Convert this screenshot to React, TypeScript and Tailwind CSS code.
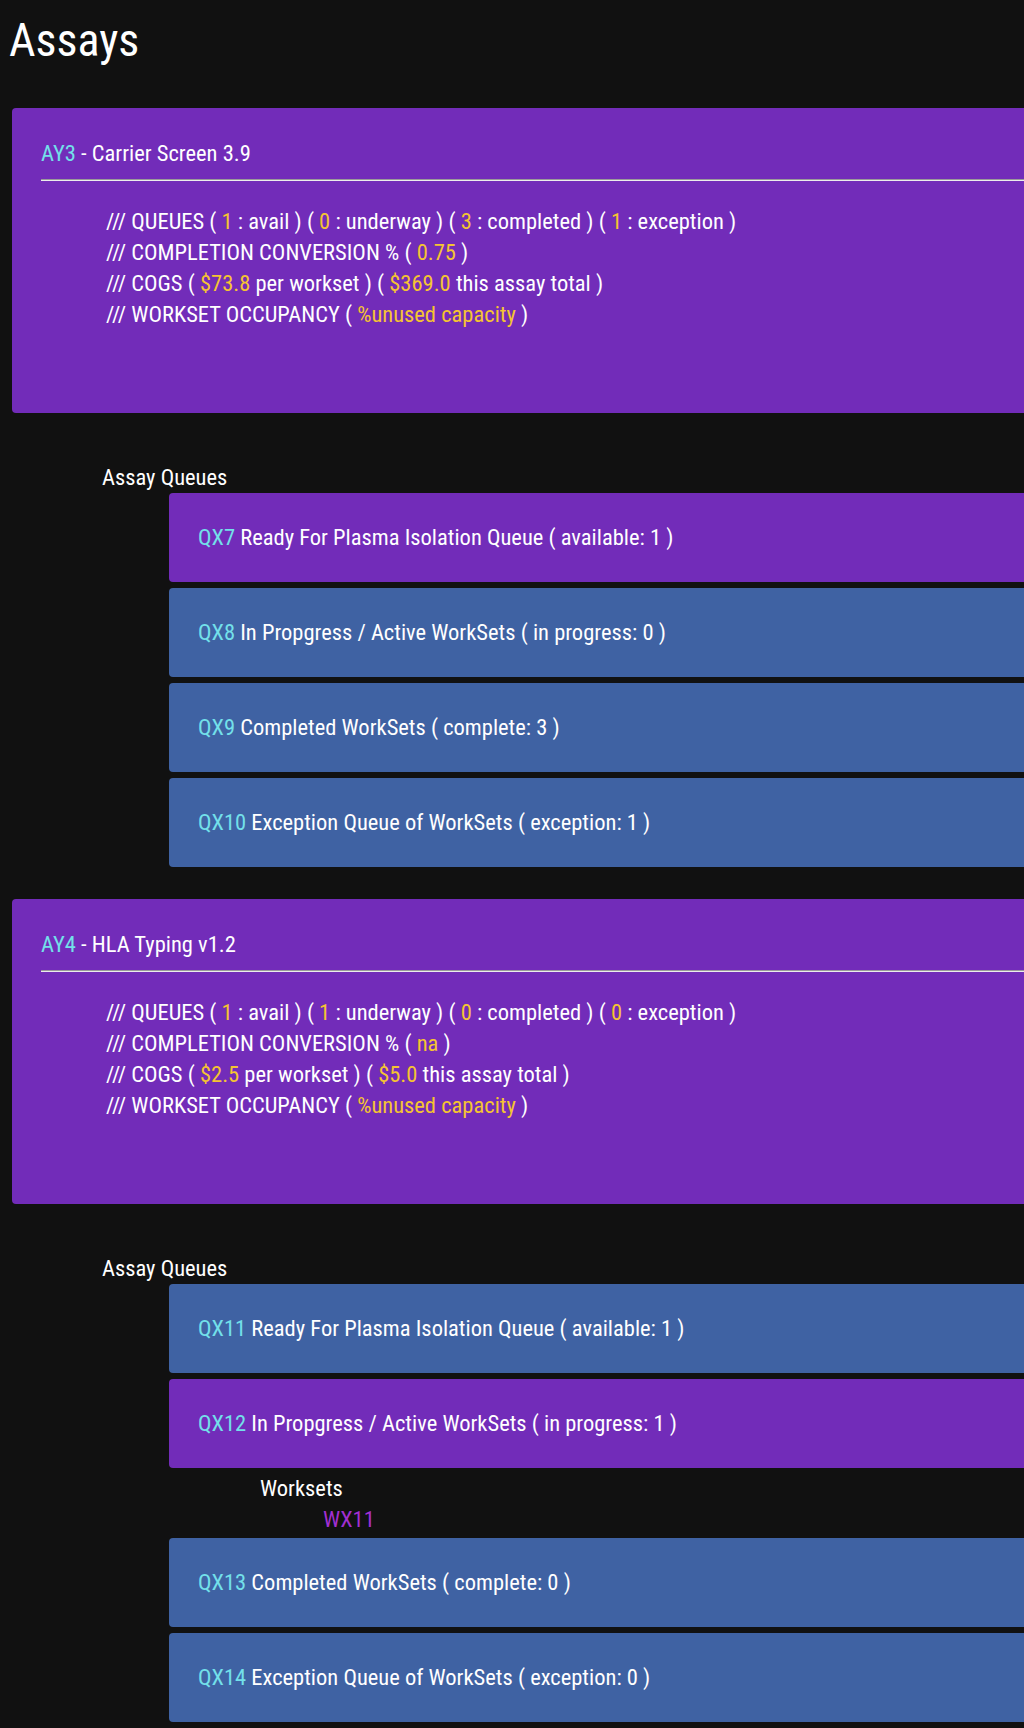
import React from 'react'

type Queue = {
    id: string
    label: string
    count: string
    active?: boolean
    worksets?: string[]
}

type Assay = {
    id: string
    name: string
    stats: { avail: string; underway: string; completed: string; exception: string }
    conversion: string
    cogsPer: string
    cogsTotal: string
    queues: Queue[]
}

const assays: Assay[] = [
    {
        id: 'AY3',
        name: 'Carrier Screen 3.9',
        stats: { avail: '1', underway: '0', completed: '3', exception: '1' },
        conversion: '0.75',
        cogsPer: '$73.8',
        cogsTotal: '$369.0',
        queues: [
            { id: 'QX7', label: 'Ready For Plasma Isolation Queue', count: 'available: 1', active: true },
            { id: 'QX8', label: 'In Propgress / Active WorkSets', count: 'in progress: 0' },
            { id: 'QX9', label: 'Completed WorkSets', count: 'complete: 3' },
            { id: 'QX10', label: 'Exception Queue of WorkSets', count: 'exception: 1' },
        ],
    },
    {
        id: 'AY4',
        name: 'HLA Typing v1.2',
        stats: { avail: '1', underway: '1', completed: '0', exception: '0' },
        conversion: 'na',
        cogsPer: '$2.5',
        cogsTotal: '$5.0',
        queues: [
            { id: 'QX11', label: 'Ready For Plasma Isolation Queue', count: 'available: 1' },
            { id: 'QX12', label: 'In Propgress / Active WorkSets', count: 'in progress: 1', active: true, worksets: ['WX11'] },
            { id: 'QX13', label: 'Completed WorkSets', count: 'complete: 0' },
            { id: 'QX14', label: 'Exception Queue of WorkSets', count: 'exception: 0' },
        ],
    },
]

const Y = ({ children }: { children: React.ReactNode }) => <span className="text-[#f5c431]">{children}</span>

function AssayCard({ assay }: { assay: Assay }) {
    const s = assay.stats
    return (
        <div className="w-[1100px] rounded-[4px] bg-[#722cb9] pl-[29px] pt-[29px] pb-[83px]">
            <div className="leading-[32px]">
                <span className="text-[#73e0ea]">{assay.id}</span> - {assay.name}
            </div>
            <div className="mt-[10px] h-[2px] border-t border-[#9a9a9a] bg-[#ececec]" />
            <div className="mt-[25px] pl-[65px] leading-[31px]">
                <div>
                    /// QUEUES ( <Y>{s.avail}</Y> : avail ) ( <Y>{s.underway}</Y> : underway ) ( <Y>{s.completed}</Y> : completed ) ( <Y>{s.exception}</Y> : exception )
                </div>
                <div>
                    /// COMPLETION CONVERSION % ( <Y>{assay.conversion}</Y> )
                </div>
                <div>
                    /// COGS ( <Y>{assay.cogsPer}</Y> per workset ) ( <Y>{assay.cogsTotal}</Y> this assay total )
                </div>
                <div>
                    /// WORKSET OCCUPANCY ( <Y>%unused capacity</Y> )
                </div>
            </div>
        </div>
    )
}

function QueueRow({ queue }: { queue: Queue }) {
    return (
        <div>
            <div
                className={`flex h-[89px] w-[900px] items-center rounded-[4px] pl-[29px] ${queue.active ? 'bg-[#722cb9]' : 'bg-[#3f62a3]'}`}
            >
                <span>
                    <span className="text-[#73e0ea]">{queue.id}</span> {queue.label} ( {queue.count} )
                </span>
            </div>
            {queue.worksets && (
                <div className="ml-[91px] mt-[5px] mb-[-3px] leading-[31px]">
                    <div>Worksets</div>
                    {queue.worksets.map((w) => (
                        <div key={w} className="pl-[63px] text-[#a22fd2]">
                            {w}
                        </div>
                    ))}
                </div>
            )}
        </div>
    )
}

export default function App() {
    return (
        <div
            className="min-h-[1728px] overflow-hidden bg-[#111111] text-white text-[22.5px]"
            style={{ fontFamily: "'Liberation Sans Narrow', 'Roboto Condensed', 'DejaVu Sans Condensed', sans-serif" }}
        >
            <h1 className="pl-[9px] pt-[12px] text-[46px] leading-[56px]">Assays</h1>

            <div className="mt-[40px] pl-[12px]">
                {assays.map((assay) => (
                    <div key={assay.id} className="mb-[32px]">
                        <AssayCard assay={assay} />
                        <div className="mt-[48px] pl-[90px] leading-[32px]">Assay Queues</div>
                        <div className="ml-[157px] flex flex-col gap-[6px]">
                            {assay.queues.map((q) => (
                                <QueueRow key={q.id} queue={q} />
                            ))}
                        </div>
                    </div>
                ))}
            </div>
        </div>
    )
}
